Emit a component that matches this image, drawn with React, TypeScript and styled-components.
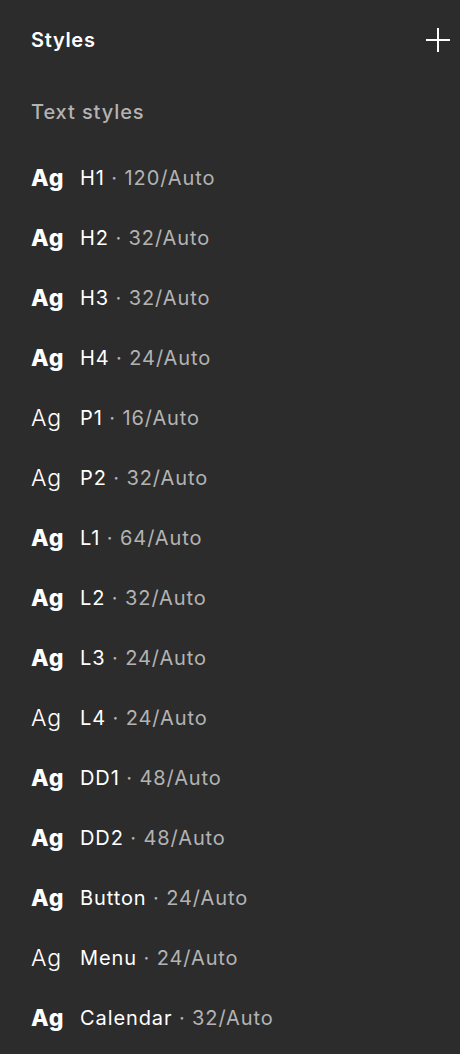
import React from "react";
import styled, { createGlobalStyle } from "styled-components";

const GlobalStyle = createGlobalStyle`
  html, body {
    margin: 0;
    padding: 0;
    background: #2c2c2c;
  }
  body {
    font-family: Inter, "Noto Sans", sans-serif;
    -webkit-font-smoothing: antialiased;
  }
`;

type TextStyle = {
  name: string;
  size: number;
  bold: boolean;
};

const textStyles: TextStyle[] = [
  { name: "H1", size: 120, bold: true },
  { name: "H2", size: 32, bold: true },
  { name: "H3", size: 32, bold: true },
  { name: "H4", size: 24, bold: true },
  { name: "P1", size: 16, bold: false },
  { name: "P2", size: 32, bold: false },
  { name: "L1", size: 64, bold: true },
  { name: "L2", size: 32, bold: true },
  { name: "L3", size: 24, bold: true },
  { name: "L4", size: 24, bold: false },
  { name: "DD1", size: 48, bold: true },
  { name: "DD2", size: 48, bold: true },
  { name: "Button", size: 24, bold: true },
  { name: "Menu", size: 24, bold: false },
  { name: "Calendar", size: 32, bold: true },
];

const Panel = styled.div`
  width: 460px;
  min-height: 1054px;
  background: #2c2c2c;
  color: #fff;
  box-sizing: border-box;
  padding: 0 10px 0 31px;
  letter-spacing: 0.9px;
`;

const Header = styled.div`
  height: 80px;
  display: flex;
  align-items: center;
  justify-content: space-between;
`;

const Title = styled.h1`
  margin: 0;
  font-size: 20px;
  font-weight: 600;
  letter-spacing: 0.7px;
  color: #ffffff;
`;

const AddButton = styled.button`
  width: 24px;
  height: 24px;
  padding: 0;
  border: 0;
  background: none;
  color: #fff;
  display: flex;
  cursor: pointer;
`;

const Section = styled.h2`
  margin: 0;
  height: 64px;
  display: flex;
  align-items: center;
  font-size: 20px;
  font-weight: 500;
  color: #b3b3b3;
`;

const List = styled.ul`
  list-style: none;
  margin: 0;
  padding: 4px 0 0;
`;

const Row = styled.li`
  height: 60px;
  display: flex;
  align-items: center;
`;

const Sample = styled.span<{ $bold: boolean }>`
  width: 49px;
  font-size: 23px;
  font-weight: ${(p) => (p.$bold ? 800 : 300)};
  letter-spacing: 0.8px;
  color: #ffffff;
`;

const Label = styled.span`
  font-size: 20px;
  font-weight: 400;
  color: #ffffff;
`;

const Meta = styled.span`
  color: #b3b3b3;
`;

const PlusIcon = () => (
  <svg width="24" height="24" viewBox="0 0 24 24" fill="none">
    <path d="M12 0v24M0 12h24" stroke="currentColor" strokeWidth="2" />
  </svg>
);

export default function App() {
  return (
    <>
      <GlobalStyle />
      <Panel>
        <Header>
          <Title>Styles</Title>
          <AddButton aria-label="Add style">
            <PlusIcon />
          </AddButton>
        </Header>
        <Section>Text styles</Section>
        <List>
          {textStyles.map((s) => (
            <Row key={s.name}>
              <Sample $bold={s.bold}>Ag</Sample>
              <Label>
                {s.name}
                <Meta> · {s.size}/Auto</Meta>
              </Label>
            </Row>
          ))}
        </List>
      </Panel>
    </>
  );
}
